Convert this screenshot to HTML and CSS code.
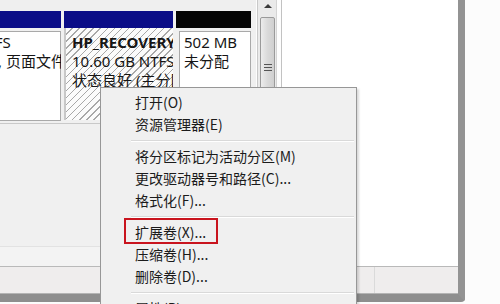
FILE: index.html
```html
<!DOCTYPE html>
<html lang="zh-CN">
<head>
<meta charset="utf-8">
<title>磁盘管理</title>
<link rel="stylesheet" href="styles.css">
</head>
<body>
<div class="screen">
  <div class="win">
    <div class="main">
      <div class="diskpane">
        <div class="topstrip"></div>
        <div class="heads">
          <div class="head blue w1"></div>
          <div class="head blue w2"></div>
          <div class="head black w3"></div>
        </div>
        <div class="parts">
          <div class="part p1">
            <div class="box">
              <div class="ln"></div>
              <div class="ln s1">NTFS</div>
              <div class="ln s2">, 页面文件, 故障转储, 主分区)</div>
            </div>
          </div>
          <div class="part p2">
            <div class="ln b">HP_RECOVERY</div>
            <div class="ln">10.60 GB NTFS</div>
            <div class="ln">状态良好 (主分区)</div>
          </div>
          <div class="part p3">
            <div class="box">
              <div class="ln"></div>
              <div class="ln">502 MB</div>
              <div class="ln">未分配</div>
            </div>
          </div>
        </div>
        <div class="empty"></div>
        <div class="legend"></div>
      </div>
      <div class="vscroll">
        <div class="track">
          <div class="arrow"></div>
          <div class="thumb"><div class="grip"></div></div>
        </div>
      </div>
      <div class="rightpane"></div>
    </div>
    <div class="status">
      <div class="cell c1"></div>
      <div class="cell c2"></div>
    </div>
  </div>

  <ul class="menu">
    <li class="item">打开(O)</li>
    <li class="item">资源管理器(E)</li>
    <li class="sep"></li>
    <li class="item">将分区标记为活动分区(M)</li>
    <li class="item">更改驱动器号和路径(C)...</li>
    <li class="item">格式化(F)...</li>
    <li class="sep"></li>
    <li class="item">扩展卷(X)...<span class="mark"></span></li>
    <li class="item">压缩卷(H)...</li>
    <li class="item">删除卷(D)...</li>
    <li class="sep"></li>
    <li class="item">属性(P)</li>
    <li class="item">帮助(H)</li>
  </ul>
</div>
</body>
</html>
```

FILE: styles.css
```css
* { box-sizing: border-box; }
html, body { margin: 0; padding: 0; background: #fff; }
.screen {
  position: relative;
  width: 500px;
  height: 304px;
  overflow: hidden;
  background: #fcfcfc;
  font-family: "Noto Sans", "Noto Sans CJK SC", sans-serif;
  color: #151515;
}
.win {
  width: 465px;
  height: 302px;
  display: flex;
  flex-direction: column;
  border-right: 7px solid #939393;
  border-bottom: 8px solid #8e8e8e;
  border-bottom-right-radius: 4px;
  box-shadow: inset -1px -1px 0 #c4c4c4;
}
.main {
  height: 267px;
  display: flex;
  border-bottom: 1px solid #b9b9b9;
}
.diskpane {
  width: 256px;
  display: flex;
  flex-direction: column;
  background: #f0f0f0;
}
.topstrip { height: 11px; background: #efefef; }
.heads { height: 17px; display: flex; gap: 3px; }
.head { height: 17px; }
.blue { background: #0b0d87; }
.black { background: #050505; }
.w1 { width: 61px; }
.w2 { width: 109px; }
.w3 { width: 75px; }
.parts {
  height: 96px;
  display: flex;
  gap: 3px;
  border-bottom: 1px solid #c9c9c9;
}
.part {
  font-size: 15px;
  line-height: 19px;
  white-space: nowrap;
  overflow: hidden;
}
.box {
  height: 100%;
  background: #fff;
  border: 1px solid #a9a9a9;
}
.p1 { width: 61px; padding: 3px 0 2px 0; }
.p1 .box { border-left: 0; padding-top: 1px; }
.s1 { margin-left: -25px; }
.s2 { margin-left: -2px; }
.p2 {
  width: 109px;
  padding: 5px 0 0 6px;
  margin-bottom: 3px;
  background-color: #fbfbfb;
  background-image: repeating-linear-gradient(135deg, #fbfbfb 0 4px, #a8a8a8 4px 5px);
  border-left: 2px solid #c8c8c8;
}
.b { font-weight: bold; }
.p3 { width: 75px; padding: 3px 0 2px 3px; }
.p3 .box { padding: 1px 0 0 4px; }
.empty { flex: 1; background: #f0f0f0; border-bottom: 1px solid #e2e2e2; }
.legend { height: 19px; background: #f3f3f3; }

.vscroll {
  width: 25px;
  background: #fdfdfd;
  padding-left: 1px;
  padding-right: 4px;
}
.track {
  height: 100%;
  background: #eaeaea;
  border-left: 1px solid #c8c8c8;
  border-right: 1px solid #d4d4d4;
  padding: 4px 1px 0 2px;
}
.arrow {
  width: 0;
  height: 0;
  margin: 0 auto 9px auto;
  border-left: 4px solid transparent;
  border-right: 4px solid transparent;
  border-bottom: 4px solid #3a3a3a;
}
.thumb {
  height: 140px;
  border: 1px solid #9a9a9a;
  border-radius: 2px;
  background: linear-gradient(90deg, #ececec, #dadada 50%, #cfcfcf);
  padding-top: 46px;
}
.grip {
  width: 8px;
  height: 7px;
  margin: 0 auto;
  background: repeating-linear-gradient(180deg, #555 0 1px, transparent 1px 3px);
}
.rightpane { flex: 1; background: #fff; border-left: 1px solid #c2c2c2; }

.status {
  flex: 1;
  display: flex;
  background: #efeded;
  border-bottom: 1px solid #b4b4b4;
}
.cell { height: 100%; }
.c1 { width: 375px; border-right: 1px solid #dadada; }
.c2 { flex: 1; }

.menu {
  position: absolute;
  left: 100px;
  top: 87px;
  width: 257px;
  height: 240px;
  margin: 0;
  padding: 3px 2px;
  list-style: none;
  background: #f0f0f0;
  border: 1px solid #979797;
  box-shadow: 2px 2px 2px rgba(0,0,0,0.15);
  font-family: "Noto Sans CJK SC", sans-serif;
  font-size: 14px;
  color: #1b1b1b;
}
.item {
  position: relative;
  height: 22px;
  line-height: 22px;
  padding-left: 32px;
  white-space: nowrap;
}
.sep {
  height: 10px;
  margin-left: 28px;
  padding-top: 5px;
}
.sep::before {
  content: "";
  display: block;
  height: 1px;
  background: #d9d9d9;
  border-bottom: 1px solid #ffffff;
}
.mark {
  position: absolute;
  left: 21px;
  top: -3px;
  width: 94px;
  height: 26px;
  border: 2px solid #c9141e;
}
```
